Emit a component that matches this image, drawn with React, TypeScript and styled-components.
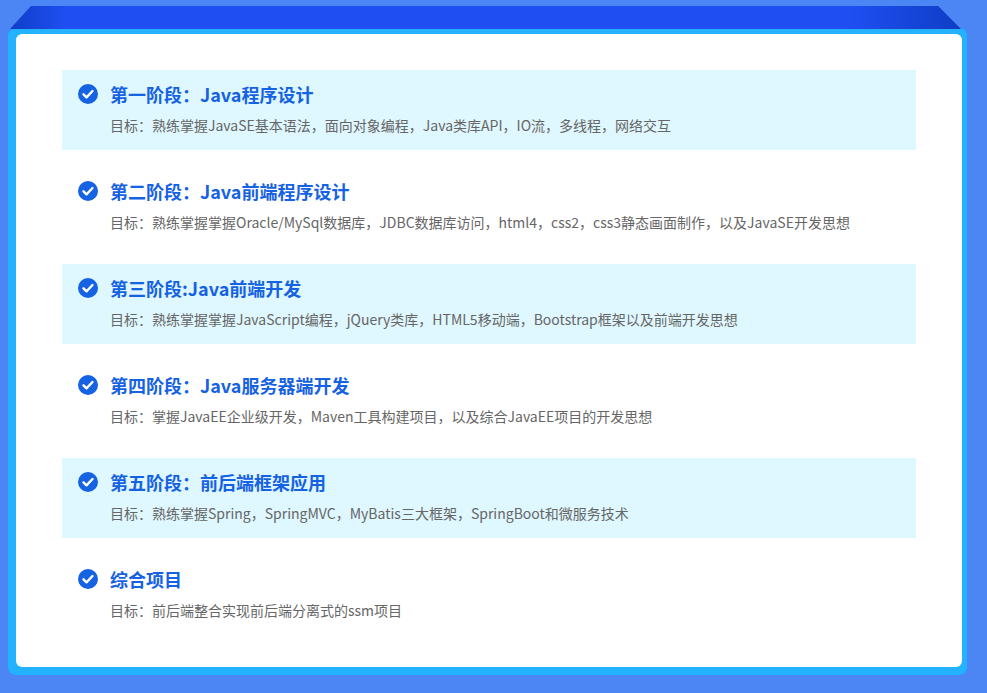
import styled, { createGlobalStyle } from 'styled-components';

const Global = createGlobalStyle`
  html, body { margin: 0; padding: 0; background: #4c86f4; }
  body { font-family: "Noto Sans CJK SC", "Noto Sans", sans-serif; }
`;

const Page = styled.div`
  width: 987px;
  height: 693px;
  padding: 6px 0 0;
  box-sizing: border-box;
`;

const Tab = styled.div`
  height: 23px;
  margin: 0 26px 0 10px;
  background: linear-gradient(90deg, #0f3fc8 0%, #1f4ff2 6%, #1f4ff2 88%, #0e3ec4 100%);
  clip-path: polygon(2.2% 0, 97.6% 0, 100% 100%, 0 100%);
`;

const Card = styled.div`
  margin: -1px 20px 0 8px;
  background: #22b2ff;
  border-radius: 8px;
  padding: 6px 5px 8px 8px;
`;

const Inner = styled.div`
  background: #fff;
  border-radius: 6px;
  height: 633px;
  box-sizing: border-box;
  padding: 36px 46px 0 46px;
  display: flex;
  flex-direction: column;
  gap: 17px;
`;

const Row = styled.div<{ shaded?: boolean }>`
  height: 80px;
  box-sizing: border-box;
  background: ${(p) => (p.shaded ? '#dff7fe' : 'transparent')};
  padding: 11px 0 0 16px;
`;

const Title = styled.div`
  display: flex;
  align-items: center;
  gap: 12px;
  color: #1562e2;
  font-size: 18px;
  font-weight: 700;
  height: 26px;
`;

const Desc = styled.div`
  margin: 8px 0 0 32px;
  font-size: 14px;
  color: #666;
`;

const Check = () => (
  <svg width="20" height="20" viewBox="0 0 20 20">
    <circle cx="10" cy="10" r="10" fill="#1562e2" />
    <path d="M5.5 10.3l3 3 6-6.3" fill="none" stroke="#fff" strokeWidth="2.4" strokeLinecap="round" strokeLinejoin="round" />
  </svg>
);

const stages = [
  ['第一阶段：Java程序设计', '目标：熟练掌握JavaSE基本语法，面向对象编程，Java类库API，IO流，多线程，网络交互'],
  ['第二阶段：Java前端程序设计', '目标：熟练掌握掌握Oracle/MySql数据库，JDBC数据库访问，html4，css2，css3静态画面制作，以及JavaSE开发思想'],
  ['第三阶段:Java前端开发', '目标：熟练掌握掌握JavaScript编程，jQuery类库，HTML5移动端，Bootstrap框架以及前端开发思想'],
  ['第四阶段：Java服务器端开发', '目标：掌握JavaEE企业级开发，Maven工具构建项目，以及综合JavaEE项目的开发思想'],
  ['第五阶段：前后端框架应用', '目标：熟练掌握Spring，SpringMVC，MyBatis三大框架，SpringBoot和微服务技术'],
  ['综合项目', '目标：前后端整合实现前后端分离式的ssm项目'],
];

export default function App() {
  return (
    <Page>
      <Global />
      <Tab />
      <Card>
        <Inner>
          {stages.map(([t, d], i) => (
            <Row key={t} shaded={i % 2 === 0}>
              <Title>
                <Check />
                {t}
              </Title>
              <Desc>{d}</Desc>
            </Row>
          ))}
        </Inner>
      </Card>
    </Page>
  );
}
